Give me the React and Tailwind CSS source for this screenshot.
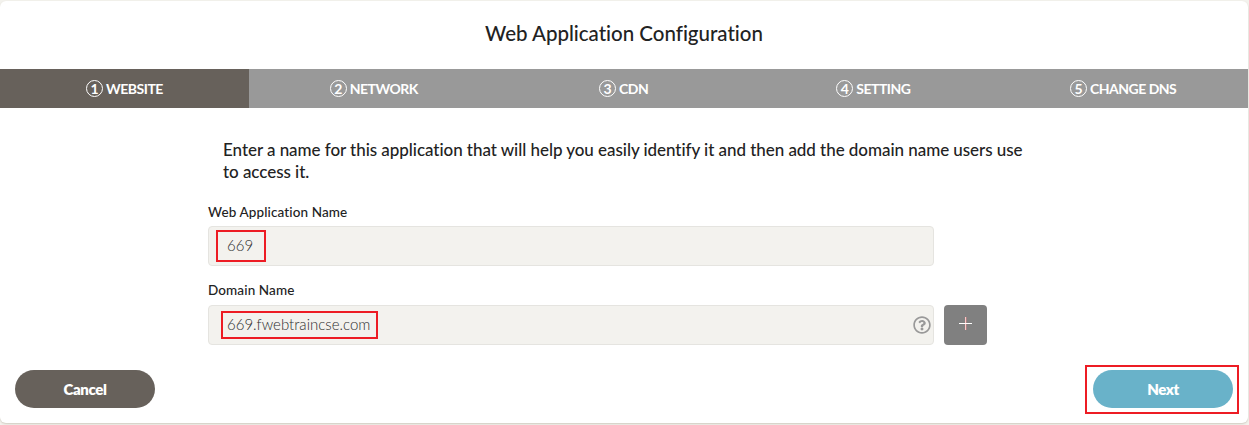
import { FaRegQuestionCircle } from "react-icons/fa";

const steps = ["WEBSITE", "NETWORK", "CDN", "SETTING", "CHANGE DNS"];

function Step({ number, label, active }) {
  return (
    <li
      className={`flex items-center justify-center gap-[3px] text-sm font-bold text-white ${
        active ? "w-[249px] bg-[#67615b]" : "flex-1 bg-[#999999]"
      }`}
    >
      <span className="flex size-[17px] items-center justify-center rounded-full border border-white text-sm leading-none">
        {number}
      </span>
      <span className="leading-5 tracking-[-0.5px]">{label}</span>
    </li>
  );
}

export default function App() {
  return (
    <div className="h-[425px] w-[1249px] overflow-hidden bg-[#f3f2ed] pt-px font-['Lato',sans-serif] text-[#222222]">
      <main className="flex h-[422px] w-[1248px] flex-col rounded-md bg-white shadow-[0_1px_2px_#cfcbc0]">
        <h1 className="flex h-[68px] items-center justify-center pb-[3px] text-[20.5px] font-medium tracking-[-0.02px]">
          Web Application Configuration
        </h1>
        <ol className="flex h-[39px] shrink-0">
          {steps.map((label, i) => (
            <Step key={label} number={i + 1} label={label} active={i === 0} />
          ))}
        </ol>

        <section className="ml-[208px] w-[779px]">
          <p className="ml-[15px] mt-[31px] h-11 w-[830px] text-[17px] font-medium leading-[22px] tracking-[-0.05px]">
            Enter a name for this application that will help you easily identify it and then add the domain name users use
            <br />
            to access it.
          </p>
          <label htmlFor="name" className="mt-[19px] block h-6 text-[13.5px] font-medium leading-5 tracking-[0.12px]">
            Web Application Name
          </label>
          <div className="relative w-[726px]">
            <input
              id="name"
              readOnly
              value="669"
              className="block h-10 w-full rounded border border-[#e5e4e0] bg-[#f3f2ee] pb-0.5 pl-[18px] text-[15px] font-light text-[#2e2e2e]"
            />
            <div className="pointer-events-none absolute left-2 top-1 h-8 w-[50px] border-2 border-[#ed1c24]" />
          </div>
          <label htmlFor="domain" className="mt-[14px] block h-[25px] text-[13.5px] font-medium leading-5 tracking-[0.12px]">
            Domain Name
          </label>
          <div className="flex gap-2.5">
            <div className="relative w-[726px]">
              <input
                id="domain"
                readOnly
                value="669.fwebtraincse.com"
                className="block h-10 w-full rounded border border-[#e5e4e0] bg-[#f3f2ee] pb-0.5 pl-[18px] text-[15px] font-light text-[#2e2e2e]"
              />
              <div className="pointer-events-none absolute left-[13px] top-[6px] h-7 w-[157px] border-2 border-[#ed1c24]" />
              <FaRegQuestionCircle className="absolute right-[3.5px] top-[11px] size-[18px] text-[#999999]" />
            </div>
            <button aria-label="Add domain" className="flex h-10 w-[43px] justify-center rounded bg-[#808080] pt-3">
              <svg viewBox="0 0 13 13" className="size-[13px]">
                <path d="M6 0h1v13H6z" fill="#ffffff" />
                <path d="M6.5 0h0.8v13h-0.8z" fill="#ff8a8a" />
                <path d="M0 6h13v1H0z" fill="#ffffff" />
              </svg>
            </button>
          </div>
        </section>

        <footer className="mt-5 flex items-start justify-between pl-[15px] pr-[9px] text-[15px] font-extrabold text-white">
          <button className="mt-[5px] h-[38px] w-[140px] rounded-full bg-[#67615b] tracking-[-0.4px]">Cancel</button>
          <div className="flex h-[49px] w-[154px] border-2 border-[#ed1c24] pl-[6px] pt-[3px]">
            <button className="h-[38px] w-[140px] rounded-full bg-[#69b2c9] tracking-[-0.5px]">Next</button>
          </div>
        </footer>
      </main>
    </div>
  );
}
